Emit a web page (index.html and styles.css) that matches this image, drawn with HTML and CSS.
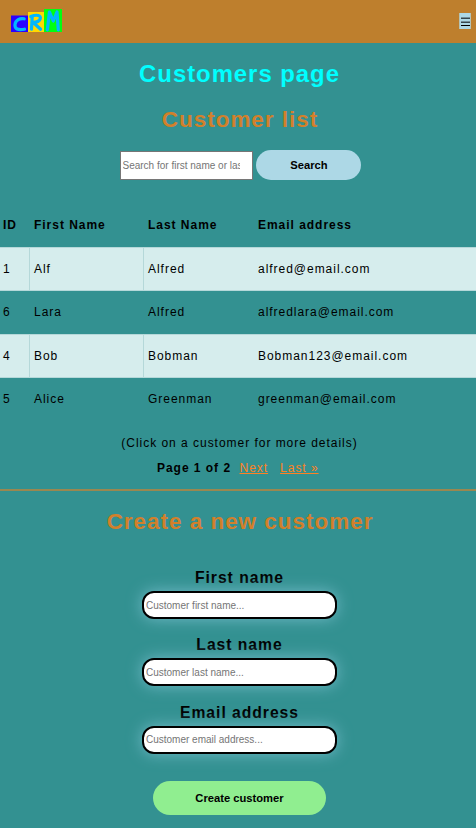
FILE: index.html
```html
<!DOCTYPE html>
<html lang="en">
<head>
<meta charset="utf-8">
<title>Customers page</title>
<link rel="stylesheet" href="styles.css">
</head>
<body>
<header class="topbar">
  <svg class="logo" width="51" height="23" viewBox="0 0 51 23" role="img" aria-label="CRM">
    <rect x="0" y="6.5" width="17" height="16.5" fill="#2a00ff"/>
    <rect x="17" y="3" width="16" height="20" fill="#ffd800"/>
    <rect x="33" y="0" width="18" height="23" fill="#00ff12"/>
    <g fill="none" stroke="#00b7ff" stroke-width="3.2" stroke-linecap="round" stroke-linejoin="round">
      <path d="M13.2 9.8C9 8.8 4.5 11 4 15.5C3.5 20 7 21.5 13.5 20.2"/>
      <path d="M20.5 20.2L21.2 8M19.8 7.6C26 5 30.5 6.5 29.2 9.8C28.2 12.5 25 13.3 22 13.3L29.6 20.2"/>
      <path d="M36.3 20.8L38.5 3L42.3 12L46 3L47.3 20.8"/>
    </g>
  </svg>
  <button class="menu" type="button" aria-label="Menu">
    <svg width="9" height="9" viewBox="0 0 9 9" shape-rendering="crispEdges"><path d="M0 0h9v1H0zM0 4h9v1H0z" fill="#718d97"/><path d="M0 1h9v1H0zM0 5h9v1H0z" fill="#36474d"/><path d="M0 8h9v1H0z" fill="#000"/></svg>
  </button>
</header>
<main>
  <h1 class="title">Customers page</h1>
  <h2 class="subtitle">Customer list</h2>
  <form class="search">
    <input class="search-input" type="text" placeholder="Search for first name or last name">
    <button class="search-button" type="button">Search</button>
  </form>
  <table class="customers">
    <colgroup><col class="col-id"><col class="col-first"><col class="col-last"><col></colgroup>
    <thead><tr><th>ID</th><th>First Name</th><th>Last Name</th><th>Email address</th></tr></thead>
    <tbody>
      <tr><td>1</td><td>Alf</td><td>Alfred</td><td>alfred@email.com</td></tr>
      <tr><td>6</td><td>Lara</td><td>Alfred</td><td>alfredlara@email.com</td></tr>
      <tr><td>4</td><td>Bob</td><td>Bobman</td><td>Bobman123@email.com</td></tr>
      <tr><td>5</td><td>Alice</td><td>Greenman</td><td>greenman@email.com</td></tr>
    </tbody>
  </table>
  <p class="hint">(Click on a customer for more details)</p>
  <nav class="pages"><b>Page 1 of 2</b><a class="next" href="#">Next</a><a class="last" href="#">Last »</a></nav>
  <section class="create">
    <h2 class="create-title">Create a new customer</h2>
    <form class="create-form">
      <label class="field">First name<input type="text" placeholder="Customer first name..."></label>
      <label class="field">Last name<input type="text" placeholder="Customer last name..."></label>
      <label class="field">Email address<input type="text" placeholder="Customer email address..."></label>
      <button class="create-button" type="button">Create customer</button>
    </form>
  </section>
</main>
</body>
</html>
```
FILE: styles.css
```css
* { box-sizing: border-box; }
body {
  margin: 0;
  height: 828px;
  overflow: hidden;
  background: #339191;
  color: #000;
  font: 12px/16px "Liberation Sans", Arial, sans-serif;
  letter-spacing: 0.97px;
}
input, button { font-family: inherit; letter-spacing: normal; color: #000; }
input::placeholder { color: #757575; opacity: 1; }
.topbar {
  display: flex;
  justify-content: space-between;
  height: 43px;
  padding: 9px 5px 0 11px;
  background: #be7f2d;
}
.logo { display: block; }
.menu {
  display: flex;
  align-items: flex-start;
  width: 12px;
  height: 16px;
  margin-top: 4px;
  padding: 4px 0 0 1px;
  border: 0 solid #b5c3b4;
  border-width: 0 1px;
  background: #add8e6;
}
.menu svg { flex: none; }
.title, .subtitle, .create-title {
  margin: 0;
  text-align: center;
  font-size: 22.5px;
  line-height: 28px;
  font-weight: bold;
}
.title { margin-top: 17px; padding-left: 3px; font-size: 23.9px; color: #00ffff; }
.subtitle { margin-top: 18px; padding-left: 4px; color: #d2802b; }
.search {
  display: flex;
  align-items: center;
  justify-content: center;
  gap: 3px;
  height: 30px;
  margin-top: 16px;
  padding-left: 4px;
}
.search-input {
  width: 133px;
  height: 29px;
  margin-top: 1px;
  padding: 1px 12px 1px 2px;
  border: 1px solid #767676;
  background: #fff;
  font-size: 10px;
}
.search-button {
  width: 105px;
  height: 30px;
  padding-left: 8px;
  border: 0;
  border-radius: 15px;
  background: #add8e6;
  font-size: 11.2px;
  font-weight: bold;
}
.customers {
  width: 100%;
  margin-top: 23px;
  border-spacing: 0;
  table-layout: fixed;
}
.col-id { width: 30px; }
.col-first { width: 114px; }
.col-last { width: 110px; }
.customers th, .customers td { height: 44px; padding: 0 0 1px 4px; text-align: left; }
.customers th:first-child, .customers td:first-child { padding-left: 3px; }
.customers tbody tr:nth-child(odd) td {
  border: solid #b5d8d9;
  border-width: 1px 0;
  background: #d6eded;
}
.customers tbody tr:nth-child(even) td { height: 43px; }
.customers tbody tr:nth-child(odd) td:nth-child(-n+2) { border-right-width: 1px; }
.hint { margin: 14px 0 0; padding-left: 3px; text-align: center; }
.pages { display: flex; height: 16px; margin-top: 9px; padding-left: 157px; }
.pages a { color: #ff8123; }
.next { margin-left: 8.5px; }
.last { margin-left: 12px; }
.create { margin-top: 13px; border-top: 2px solid #9b8750; }
.create-title { margin-top: 17px; padding-left: 4px; color: #d2802b; }
.create-form {
  display: flex;
  flex-direction: column;
  align-items: center;
  margin-top: 32px;
  padding-left: 3px;
}
.field {
  display: flex;
  flex-direction: column;
  align-items: center;
  height: 67.3px;
  font-size: 15.7px;
  line-height: 20px;
  font-weight: bold;
}
.field input {
  width: 195px;
  height: 28px;
  margin-top: 3px;
  padding: 0 2px;
  border: 2px solid #000;
  border-radius: 12px;
  background: #fff;
  box-shadow: 0 0 15px #70b9c6;
  font-size: 10px;
}
.create-button {
  width: 173px;
  height: 34px;
  margin-top: 11.5px;
  border: 0;
  border-radius: 17px;
  background: #90ee90;
  font-size: 11.2px;
  font-weight: bold;
}
```
